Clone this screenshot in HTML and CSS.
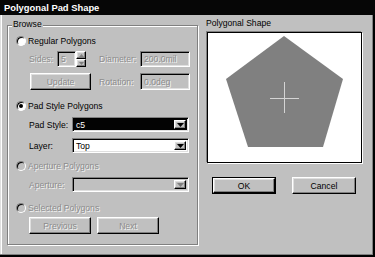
FILE: index.html
```html
<!DOCTYPE html>
<html>
<head>
<meta charset="utf-8">
<link rel="stylesheet" href="styles.css">
</head>
<body>
<div class="window">
  <div class="titlebar">Polygonal Pad Shape</div>
  <div class="content">
    <div class="group">
      <span class="group-label">Browse</span>

      <div class="row radio-row r1">
        <span class="radio"></span><span class="rtext">Regular Polygons</span>
      </div>

      <div class="row field-row r2">
        <span class="lbl dis w-sides">Sides:</span>
        <span class="spin">
          <span class="edit sunken dis-bg"><span class="dis">5</span></span>
          <span class="spin-btns">
            <span class="sbtn raised"><svg width="5" height="3" viewBox="0 0 5 3"><path d="M2.5 0 L5 3 L0 3 Z" fill="#808080"/></svg></span>
            <span class="sbtn raised"><svg width="5" height="3" viewBox="0 0 5 3"><path d="M0 0 L5 0 L2.5 3 Z" fill="#808080"/></svg></span>
          </span>
        </span>
        <span class="lbl dis w-diam">Diameter:</span>
        <span class="input sunken dis-bg"><span class="dis">200.0mil</span></span>
      </div>

      <div class="row field-row r3">
        <span class="btn raised dis w-update">Update</span>
        <span class="lbl dis w-rot">Rotation:</span>
        <span class="input sunken dis-bg tall"><span class="dis">0.0deg</span></span>
      </div>

      <div class="row radio-row r4">
        <span class="radio checked"></span><span class="rtext">Pad Style Polygons</span>
      </div>

      <div class="row field-row r5">
        <span class="lbl w-pad">Pad Style:</span>
        <span class="combo sunken combo-sel">
          <span class="combo-text">c5</span>
          <span class="drop raised"><svg width="7" height="4" viewBox="0 0 7 4"><path d="M0 0 L7 0 L3.5 4 Z" fill="#000"/></svg></span>
        </span>
      </div>

      <div class="row field-row r6">
        <span class="lbl w-pad">Layer:</span>
        <span class="combo sunken combo-white">
          <span class="combo-text">Top</span>
          <span class="drop raised"><svg width="7" height="4" viewBox="0 0 7 4"><path d="M0 0 L7 0 L3.5 4 Z" fill="#000"/></svg></span>
        </span>
      </div>

      <div class="row radio-row r7">
        <span class="radio disabled"></span><span class="rtext dis">Aperture Polygons</span>
      </div>

      <div class="row field-row r8">
        <span class="lbl dis w-pad">Aperture:</span>
        <span class="combo sunken dis-bg">
          <span class="combo-text"></span>
          <span class="drop raised"><svg width="7" height="4" viewBox="0 0 7 4"><path d="M0 0 L7 0 L3.5 4 Z" fill="#808080"/></svg></span>
        </span>
      </div>

      <div class="row radio-row r9">
        <span class="radio disabled"></span><span class="rtext dis">Selected Polygons</span>
      </div>

      <div class="row field-row r10">
        <span class="btn raised dis w-nav">Previous</span>
        <span class="btn raised dis w-nav gap-nav">Next</span>
      </div>
    </div>

    <div class="side">
      <div class="side-label">Polygonal Shape</div>
      <div class="preview">
        <svg width="153" height="129" viewBox="0 0 153 129">
          <polygon points="76,3 135,46 115,114 40,114 18,46" fill="#808080"/>
          <line x1="62" y1="65.5" x2="91" y2="65.5" stroke="#d4d4d4" stroke-width="1"/>
          <line x1="76.5" y1="49" x2="76.5" y2="80" stroke="#d4d4d4" stroke-width="1"/>
        </svg>
      </div>
      <div class="actions">
        <span class="btn-default"><span class="btn raised w-act">OK</span></span>
        <span class="btn raised w-act cancel">Cancel</span>
      </div>
    </div>
  </div>
</div>
</body>
</html>
```

FILE: styles.css
```css
* { box-sizing: border-box; }
html, body { margin: 0; padding: 0; }
body {
  width: 375px;
  height: 257px;
  overflow: hidden;
  background: #c0c0c0;
  font-family: "Liberation Sans", Arial, sans-serif;
  font-size: 8.6px;
  color: #000;
}
.window {
  width: 375px;
  height: 257px;
  background: #c0c0c0;
  display: flex;
  flex-direction: column;
  box-shadow: inset -1px -1px 0 #000, inset -2px -2px 0 #000, inset -3px -3px 0 #808080, inset 1px 0 0 #dfdfdf, inset 2px 0 0 #fff;
}
.titlebar {
  height: 15px;
  line-height: 15px;
  background: #060606;
  color: #fff;
  font-weight: bold;
  font-size: 9.4px;
  padding-left: 4px;
  flex: none;
}
.content {
  display: flex;
  padding: 3px 0 0 7px;
}
.group {
  position: relative;
  width: 191px;
  height: 220px;
  margin-top: 7px;
  border: 1px solid #808080;
  box-shadow: 1px 1px 0 #fff, inset 1px 1px 0 #fff;
  display: flex;
  flex-direction: column;
}
.group-label {
  position: absolute;
  left: 4px;
  top: -7px;
  line-height: 11px;
  padding: 0 1px;
  background: #c0c0c0;
}
.row { display: flex; align-items: center; flex: none; }
.radio-row { height: 12px; padding-left: 8px; }
.field-row { padding-left: 21px; }
.r1 { margin-top: 9px; }
.r2 { margin-top: 4px; height: 16px; }
.r3 { margin-top: 6px; height: 17px; }
.r4 { margin-top: 10px; }
.r5 { margin-top: 5px; height: 15px; }
.r6 { margin-top: 6px; height: 15px; }
.r7 { margin-top: 7px; }
.r8 { margin-top: 5px; height: 15px; }
.r9 { margin-top: 10px; }
.r10 { margin-top: 3px; height: 17px; }

.radio {
  width: 10px;
  height: 10px;
  border-radius: 50%;
  border: 1px solid;
  border-color: #808080 #fff #fff #808080;
  background: #fff;
  box-shadow: inset 1px 1px 0 #000;
  position: relative;
  flex: none;
}
.radio.disabled { background: #c0c0c0; }
.radio.checked::after {
  content: "";
  position: absolute;
  left: 2px;
  top: 2px;
  width: 4px;
  height: 4px;
  border-radius: 50%;
  background: #000;
}
.rtext { margin-left: 2px; line-height: 12px; white-space: nowrap; }

.dis { color: #8c8c8c; text-shadow: 1px 1px 0 #f4f4f4; }
.lbl { white-space: nowrap; line-height: 12px; }
.w-sides { width: 28px; }
.w-diam { width: 41px; margin-left: 13px; }
.w-rot { width: 41px; margin-left: 8px; }
.w-pad { width: 43px; }

.sunken {
  border: 1px solid;
  border-color: #808080 #fff #fff #808080;
  box-shadow: inset 1px 1px 0 #000, inset -1px -1px 0 #dfdfdf;
}
.raised {
  border: 1px solid;
  border-color: #fff #000 #000 #fff;
  box-shadow: inset -1px -1px 0 #808080, inset 1px 1px 0 #dfdfdf;
  background: #c0c0c0;
}
.dis-bg { background: #c0c0c0; }

.spin { display: flex; width: 29px; height: 16px; }
.edit { width: 19px; height: 16px; display: flex; align-items: center; padding-left: 3px; }
.spin-btns { display: flex; flex-direction: column; width: 10px; }
.sbtn { height: 8px; display: flex; align-items: center; justify-content: center; }

.input {
  width: 50px;
  height: 16px;
  display: flex;
  align-items: center;
  padding-left: 3px;
  white-space: nowrap;
}
.input.tall { height: 17px; }

.btn {
  display: flex;
  align-items: center;
  justify-content: center;
  height: 17px;
  white-space: nowrap;
}
.w-update { width: 61px; margin-left: 1px; }
.w-nav { width: 62px; }
.gap-nav { margin-left: 6px; }

.combo {
  width: 117px;
  height: 15px;
  display: flex;
  align-items: stretch;
  padding: 2px;
}
.combo-sel { background: #030303; color: #fff; }
.combo-white { background: #fff; }
.combo-text { flex: 1; line-height: 11px; padding-left: 1px; }
.drop {
  width: 12px;
  display: flex;
  align-items: center;
  justify-content: center;
  flex: none;
}

.side {
  margin-left: 8px;
  width: 157px;
  display: flex;
  flex-direction: column;
}
.side-label { line-height: 11px; height: 11px; white-space: nowrap; }
.preview {
  margin-top: 3px;
  margin-left: 1px;
  width: 155px;
  height: 131px;
  border: 1px solid #000;
  background: #fff;
  box-shadow: -1px -1px 0 #808080, 1px 1px 0 #fff;
}
.preview svg { display: block; }
.actions { display: flex; margin-top: 14px; padding-left: 6px; }
.btn-default { display: block; border: 1px solid #000; width: 64px; height: 17px; }
.btn-default .btn { width: 62px; height: 15px; }
.w-act { width: 64px; }
.cancel { margin-left: 16px; }
```
